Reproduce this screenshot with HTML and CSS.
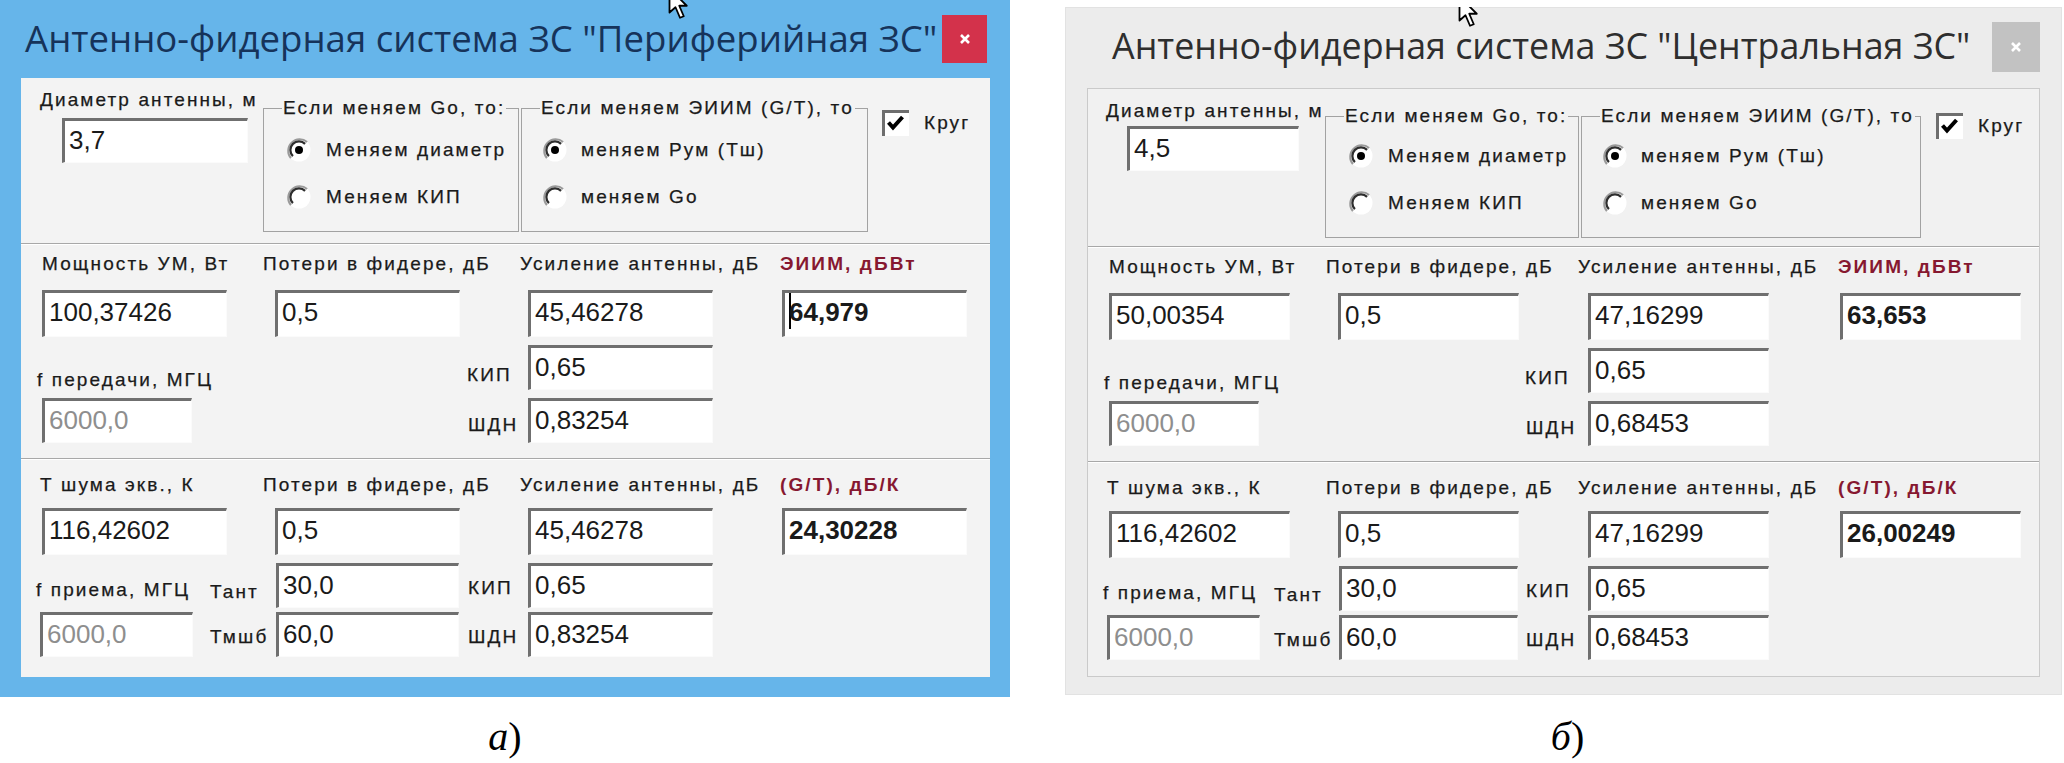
FILE: index.html
```html
<!DOCTYPE html>
<html lang="ru">
<head>
<meta charset="utf-8">
<title>Антенно-фидерная система ЗС</title>
<link rel="stylesheet" href="styles.css">
</head>
<body>
<div class="figure">

  <div class="fig fig-a">
    <div class="win win-a">
      <div class="titlebar">
        <div class="title">Антенно-фидерная система ЗС "Периферийная ЗС"</div>
        <div class="close"><svg width="12" height="12" viewBox="0 0 12 12"><path d="M2 2L10 10M10 2L2 10" stroke="#fff" stroke-width="2.6"/></svg></div>
      </div>
      <div class="client">
        <div class="sec-top">
          <div class="diam">
            <div class="lbl">Диаметр антенны, м</div>
            <div class="in in-d">3,7</div>
          </div>
          <fieldset class="grp grp1">
            <legend class="lbl">Если меняем Go, то:</legend>
            <div class="opts">
              <div class="opt lbl"><svg viewBox="0 0 26 26"><circle cx="13" cy="13" r="11.5" fill="#fff"/><path d="M21.1 4.9A11.5 11.5 0 0 0 4.9 21.1" fill="none" stroke="#9a9a9a" stroke-width="2"/><path d="M19.1 6.9A8.6 8.6 0 0 0 6.9 19.1" fill="none" stroke="#2e2e2e" stroke-width="2.2"/><circle cx="13" cy="13" r="4" fill="#000"/></svg>Меняем диаметр</div>
              <div class="opt lbl"><svg viewBox="0 0 26 26"><circle cx="13" cy="13" r="11.5" fill="#fff"/><path d="M21.1 4.9A11.5 11.5 0 0 0 4.9 21.1" fill="none" stroke="#9a9a9a" stroke-width="2"/><path d="M19.1 6.9A8.6 8.6 0 0 0 6.9 19.1" fill="none" stroke="#2e2e2e" stroke-width="2.2"/></svg>Меняем КИП</div>
            </div>
          </fieldset>
          <fieldset class="grp grp2">
            <legend class="lbl">Если меняем ЭИИМ (G/T), то</legend>
            <div class="opts">
              <div class="opt lbl"><svg viewBox="0 0 26 26"><circle cx="13" cy="13" r="11.5" fill="#fff"/><path d="M21.1 4.9A11.5 11.5 0 0 0 4.9 21.1" fill="none" stroke="#9a9a9a" stroke-width="2"/><path d="M19.1 6.9A8.6 8.6 0 0 0 6.9 19.1" fill="none" stroke="#2e2e2e" stroke-width="2.2"/><circle cx="13" cy="13" r="4" fill="#000"/></svg>меняем Рум (Тш)</div>
              <div class="opt lbl"><svg viewBox="0 0 26 26"><circle cx="13" cy="13" r="11.5" fill="#fff"/><path d="M21.1 4.9A11.5 11.5 0 0 0 4.9 21.1" fill="none" stroke="#9a9a9a" stroke-width="2"/><path d="M19.1 6.9A8.6 8.6 0 0 0 6.9 19.1" fill="none" stroke="#2e2e2e" stroke-width="2.2"/></svg>меняем Go</div>
            </div>
          </fieldset>
          <div class="chk lbl"><svg viewBox="0 0 27 26"><rect width="27" height="26" fill="#fff"/><path d="M1.5 26V1.5H27" fill="none" stroke="#6e6e6e" stroke-width="3"/><path d="M6.5 12.5l4.5 5 9.5-10.5" fill="none" stroke="#000" stroke-width="4"/></svg>Круг</div>
        </div>

        <div class="grid sec-tx">
          <div class="lbl hd c-a r1 pl-a">Мощность УМ, Вт</div>
          <div class="lbl hd c-b r1">Потери в фидере, дБ</div>
          <div class="lbl hd c-gh r1">Усиление антенны, дБ</div>
          <div class="lbl hd c-r r1 red">ЭИИМ, дБВт</div>
          <div class="in in-t c-a r2 ml-a">100,37426</div>
          <div class="in in-t c-b r2 ml-b">0,5</div>
          <div class="in in-t c-g r2">45,46278</div>
          <div class="in in-t c-r r2 ml-r bold"><span class="caret"></span>64,979</div>
          <div class="lbl c-a r3 pl-f lb-f1">f передачи, МГЦ</div>
          <div class="lbl c-side r3 lb-k">КИП</div>
          <div class="in c-g r3">0,65</div>
          <div class="in in-f c-a r4 ml-a">6000,0</div>
          <div class="lbl c-side r4 lb-s">ШДН</div>
          <div class="in c-g r4">0,83254</div>
        </div>

        <div class="grid sec-rx">
          <div class="lbl hd c-a r1 pl-t">Т шума экв., К</div>
          <div class="lbl hd c-b r1">Потери в фидере, дБ</div>
          <div class="lbl hd c-gh r1">Усиление антенны, дБ</div>
          <div class="lbl hd c-r r1 red">(G/T), дБ/К</div>
          <div class="in in-t c-a r2 ml-a">116,42602</div>
          <div class="in in-t c-b r2 ml-b">0,5</div>
          <div class="in in-t c-g r2">45,46278</div>
          <div class="in in-t c-r r2 ml-r bold">24,30228</div>
          <div class="lbl c-a r3 pl-fr lb-f2">f приема, МГЦ</div>
          <div class="lbl c-t r3 lb-ta">Тант</div>
          <div class="in c-b r3 ml-c">30,0</div>
          <div class="lbl c-side r3 lb-k2">КИП</div>
          <div class="in c-g r3">0,65</div>
          <div class="in in-f in-f2 c-a r4 ml-f">6000,0</div>
          <div class="lbl c-t r4 lb-tm">Тмшб</div>
          <div class="in c-b r4 ml-c">60,0</div>
          <div class="lbl c-side r4 lb-s2">ШДН</div>
          <div class="in c-g r4">0,83254</div>
        </div>
      </div>
      <svg class="cursor cursor-a" viewBox="0 0 14 22" width="21" height="33"><path d="M1 1V17L5 13.5L8 20.5L10.5 19.5L7.5 12.5H12.5Z" fill="#fff" stroke="#000" stroke-width="1.2" stroke-linejoin="round"/></svg>
    </div>
    <div class="cap"><i>а</i>)</div>
  </div>

  <div class="fig fig-b">
    <div class="win win-b">
      <div class="titlebar">
        <div class="title">Антенно-фидерная система ЗС "Центральная ЗС"</div>
        <div class="close"><svg width="12" height="12" viewBox="0 0 12 12"><path d="M2 2L10 10M10 2L2 10" stroke="#fff" stroke-width="2.6"/></svg></div>
      </div>
      <div class="client">
        <div class="sec-top">
          <div class="diam">
            <div class="lbl">Диаметр антенны, м</div>
            <div class="in in-d">4,5</div>
          </div>
          <fieldset class="grp grp1">
            <legend class="lbl">Если меняем Go, то:</legend>
            <div class="opts">
              <div class="opt lbl"><svg viewBox="0 0 26 26"><circle cx="13" cy="13" r="11.5" fill="#fff"/><path d="M21.1 4.9A11.5 11.5 0 0 0 4.9 21.1" fill="none" stroke="#9a9a9a" stroke-width="2"/><path d="M19.1 6.9A8.6 8.6 0 0 0 6.9 19.1" fill="none" stroke="#2e2e2e" stroke-width="2.2"/><circle cx="13" cy="13" r="4" fill="#000"/></svg>Меняем диаметр</div>
              <div class="opt lbl"><svg viewBox="0 0 26 26"><circle cx="13" cy="13" r="11.5" fill="#fff"/><path d="M21.1 4.9A11.5 11.5 0 0 0 4.9 21.1" fill="none" stroke="#9a9a9a" stroke-width="2"/><path d="M19.1 6.9A8.6 8.6 0 0 0 6.9 19.1" fill="none" stroke="#2e2e2e" stroke-width="2.2"/></svg>Меняем КИП</div>
            </div>
          </fieldset>
          <fieldset class="grp grp2">
            <legend class="lbl">Если меняем ЭИИМ (G/T), то</legend>
            <div class="opts">
              <div class="opt lbl"><svg viewBox="0 0 26 26"><circle cx="13" cy="13" r="11.5" fill="#fff"/><path d="M21.1 4.9A11.5 11.5 0 0 0 4.9 21.1" fill="none" stroke="#9a9a9a" stroke-width="2"/><path d="M19.1 6.9A8.6 8.6 0 0 0 6.9 19.1" fill="none" stroke="#2e2e2e" stroke-width="2.2"/><circle cx="13" cy="13" r="4" fill="#000"/></svg>меняем Рум (Тш)</div>
              <div class="opt lbl"><svg viewBox="0 0 26 26"><circle cx="13" cy="13" r="11.5" fill="#fff"/><path d="M21.1 4.9A11.5 11.5 0 0 0 4.9 21.1" fill="none" stroke="#9a9a9a" stroke-width="2"/><path d="M19.1 6.9A8.6 8.6 0 0 0 6.9 19.1" fill="none" stroke="#2e2e2e" stroke-width="2.2"/></svg>меняем Go</div>
            </div>
          </fieldset>
          <div class="chk lbl"><svg viewBox="0 0 27 26"><rect width="27" height="26" fill="#fff"/><path d="M1.5 26V1.5H27" fill="none" stroke="#6e6e6e" stroke-width="3"/><path d="M6.5 12.5l4.5 5 9.5-10.5" fill="none" stroke="#000" stroke-width="4"/></svg>Круг</div>
        </div>

        <div class="grid sec-tx">
          <div class="lbl hd c-a r1 pl-a">Мощность УМ, Вт</div>
          <div class="lbl hd c-b r1">Потери в фидере, дБ</div>
          <div class="lbl hd c-gh r1">Усиление антенны, дБ</div>
          <div class="lbl hd c-r r1 red">ЭИИМ, дБВт</div>
          <div class="in in-t c-a r2 ml-a">50,00354</div>
          <div class="in in-t c-b r2 ml-b">0,5</div>
          <div class="in in-t c-g r2">47,16299</div>
          <div class="in in-t c-r r2 ml-r bold">63,653</div>
          <div class="lbl c-a r3 pl-f lb-f1">f передачи, МГЦ</div>
          <div class="lbl c-side r3 lb-k">КИП</div>
          <div class="in c-g r3">0,65</div>
          <div class="in in-f c-a r4 ml-a">6000,0</div>
          <div class="lbl c-side r4 lb-s">ШДН</div>
          <div class="in c-g r4">0,68453</div>
        </div>

        <div class="grid sec-rx">
          <div class="lbl hd c-a r1 pl-t">Т шума экв., К</div>
          <div class="lbl hd c-b r1">Потери в фидере, дБ</div>
          <div class="lbl hd c-gh r1">Усиление антенны, дБ</div>
          <div class="lbl hd c-r r1 red">(G/T), дБ/К</div>
          <div class="in in-t c-a r2 ml-a">116,42602</div>
          <div class="in in-t c-b r2 ml-b">0,5</div>
          <div class="in in-t c-g r2">47,16299</div>
          <div class="in in-t c-r r2 ml-r bold">26,00249</div>
          <div class="lbl c-a r3 pl-fr lb-f2">f приема, МГЦ</div>
          <div class="lbl c-t r3 lb-ta">Тант</div>
          <div class="in c-b r3 ml-c">30,0</div>
          <div class="lbl c-side r3 lb-k2">КИП</div>
          <div class="in c-g r3">0,65</div>
          <div class="in in-f in-f2 c-a r4 ml-f">6000,0</div>
          <div class="lbl c-t r4 lb-tm">Тмшб</div>
          <div class="in c-b r4 ml-c">60,0</div>
          <div class="lbl c-side r4 lb-s2">ШДН</div>
          <div class="in c-g r4">0,68453</div>
        </div>
      </div>
      <svg class="cursor cursor-b" viewBox="0 0 14 22" width="21" height="33"><path d="M1 1V17L5 13.5L8 20.5L10.5 19.5L7.5 12.5H12.5Z" fill="#fff" stroke="#000" stroke-width="1.2" stroke-linejoin="round"/></svg>
    </div>
    <div class="cap"><i>б</i>)</div>
  </div>

</div>
</body>
</html>
```

FILE: styles.css
```css
* { box-sizing: border-box; }
html, body { margin: 0; padding: 0; background: #fff; }
body {
  width: 2064px;
  height: 763px;
  overflow: hidden;
  font-family: "Liberation Sans", Arial, sans-serif;
  color: #1a1a1a;
}
.figure { display: flex; align-items: flex-start; }
.fig-a { width: 1010px; }
.fig-b { width: 997px; margin-left: 55px; padding-top: 7px; }

.cap {
  font-family: "Liberation Serif", "Times New Roman", serif;
  font-size: 40px;
  line-height: 40px;
  text-align: center;
  color: #000;
}
.fig-a .cap { margin-top: 20px; }
.fig-b .cap { margin-top: 22px; padding-left: 8px; }

/* windows */
.win { display: flex; flex-direction: column; position: relative; overflow: hidden; }
.win-a { width: 1010px; height: 697px; background: #66b5ea; --iw: 185px; }
.win-b { width: 997px; height: 688px; background: #ececec; --iw: 181px; box-shadow: inset 0 0 0 1px #e2e2e2; }

.titlebar { display: flex; align-items: flex-start; flex: none; }
.win-a .titlebar { height: 78px; padding: 14px 23px 0 25px; }
.win-b .titlebar { height: 81px; padding: 14px 22px 0 47px; }
.title {
  flex: 1;
  font-family: "Open Sans", "Noto Sans", sans-serif;
  font-size: 36.6px;
  line-height: 49px;
  white-space: nowrap;
}
.win-a .title { color: #16335a; }
.win-b .title { color: #2e2e2e; font-size: 35.8px; }
.close { display: flex; align-items: center; justify-content: center; flex: none; }
.win-a .close { width: 45px; height: 48px; margin-top: 1px; background: #d3324b; }
.win-b .close { width: 48px; height: 50px; margin-top: 1px; background: #c2c2c2; }

.client { flex: 1; display: flex; flex-direction: column; }
.win-a .client { margin: 0 20px 20px 21px; background: #f3f3f3; }
.win-b .client { margin: 0 22px 18px 22px; background: #f1f1f1; border: 1px solid #cacaca; }

/* common text */
.lbl {
  font-size: 19px;
  line-height: 20px;
  letter-spacing: 2.1px;
  white-space: nowrap;
  -webkit-text-stroke: 0.25px currentColor;
}
.red { color: #861830; font-weight: bold; -webkit-text-stroke: 0; }
.bold { font-weight: bold; color: #111; }

/* inputs */
.in {
  width: var(--iw);
  height: 45px;
  background: #fff;
  border-style: solid;
  border-width: 3px 1px 1px 3px;
  border-color: #6f6f6f #fbfbfb #fbfbfb #6f6f6f;
  font-size: 26px;
  line-height: 39px;
  padding-left: 4px;
  white-space: nowrap;
  align-self: end;
  color: #1a1a1a;
}
.in-t { height: 47px; }
.in-f { width: 150px; color: #8e8e8e; }
.in-f2 { width: 153px; }
.caret {
  display: inline-block;
  width: 2px;
  height: 36px;
  background: #000;
  vertical-align: -8px;
  margin-right: -2px;
}

/* top section */
.sec-top { flex: none; display: flex; align-items: flex-start; }
.win-a .sec-top { height: 165px; }
.win-b .sec-top { height: 157px; }
.diam { flex: none; }
.win-a .diam { width: 242px; padding-left: 19px; }
.win-b .diam { width: 237px; padding-left: 18px; }
.diam .lbl { margin-top: 12px; }
.win-a .in-d { width: 186px; margin-left: 22px; margin-top: 8px; }
.win-b .in-d { width: 172px; margin-left: 21px; margin-top: 5px; }

.grp {
  flex: none;
  margin: 20px 0 0 0;
  padding: 0;
  min-inline-size: 0;
  border: 1px solid #a2a2a2;
  height: 134px;
}
.grp legend { margin-left: 18px; padding: 0 1px; }
.win-b .grp { margin-top: 17px; height: 132px; }
.win-a .grp1 { width: 256px; }
.win-a .grp2 { width: 347px; margin-left: 2px; }
.win-b .grp1 { width: 254px; }
.win-b .grp2 { width: 340px; margin-left: 2px; }
.opts { display: flex; flex-direction: column; gap: 21px; padding-top: 19px; }
.win-b .opts { padding-top: 17px; gap: 21px; }
.opt { display: flex; align-items: center; height: 26px; }
.opt svg { width: 26px; height: 26px; flex: none; margin-right: 14px; }
.grp1 .opt { padding-left: 22px; }
.grp2 .opt { padding-left: 20px; }
.grp2 .opt svg { margin-right: 13px; }

.chk { display: flex; align-items: center; flex: none; }
.win-a .chk { margin: 32px 0 0 14px; }
.win-b .chk { margin: 24px 0 0 15px; }
.chk svg { width: 27px; height: 26px; margin-right: 15px; }

/* grid sections */
.grid {
  display: grid;
  border-top: 1px solid #a8a8a8;
  box-shadow: inset 0 1px 0 #ffffff;
}
.win-a .grid { grid-template-columns: 189px 53px 203px 62px 252px 1fr; }
.win-b .grid { grid-template-columns: 186px 52px 198px 64px 250px 1fr; }
.sec-tx { flex: none; height: 215px; grid-template-rows: 46px 47px 53px 53px; }
.sec-rx { flex: 1; grid-template-rows: 49px 47px 53px 49px; }

.c-a { grid-column: 1 / 3; }
.c-t { grid-column: 2; }
.c-b { grid-column: 3; }
.c-side { grid-column: 4; }
.c-gh { grid-column: 4 / 6; padding-left: 54px; }
.c-g { grid-column: 5; }
.c-r { grid-column: 6; }
.r1 { grid-row: 1; }
.r2 { grid-row: 2; }
.r3 { grid-row: 3; }
.r4 { grid-row: 4; }

.hd { align-self: start; }
.sec-tx .hd { margin-top: 10px; }
.sec-rx .hd { margin-top: 16px; }
.pl-a { padding-left: 21px; }
.pl-t { padding-left: 19px; }
.pl-f { padding-left: 16px; }
.pl-fr { padding-left: 15px; }
.ml-a { margin-left: 21px; }
.ml-f { margin-left: 19px; }
.ml-b { margin-left: 12px; }
.ml-c { margin-left: 13px; width: calc(var(--iw) - 2px); }
.ml-r { margin-left: 2px; }

.lb-f1, .lb-f2, .lb-ta, .lb-tm, .lb-k, .lb-s, .lb-k2, .lb-s2 { align-self: end; }
.lb-f1 { margin-bottom: 0; }
.lb-k { margin-bottom: 5px; padding-left: 1px; }
.lb-s { margin-bottom: 8px; padding-left: 2px; }
.lb-f2 { margin-bottom: 8px; }
.lb-ta { margin-bottom: 6px; }
.lb-tm { margin-bottom: 10px; }
.lb-k2 { margin-bottom: 10px; padding-left: 2px; }
.lb-s2 { margin-bottom: 10px; padding-left: 2px; }

/* mouse pointers drawn over the screenshots */
.cursor { position: absolute; }
.cursor-a { left: 668px; top: -13px; }
.cursor-b { left: 393px; top: -12px; }
```
